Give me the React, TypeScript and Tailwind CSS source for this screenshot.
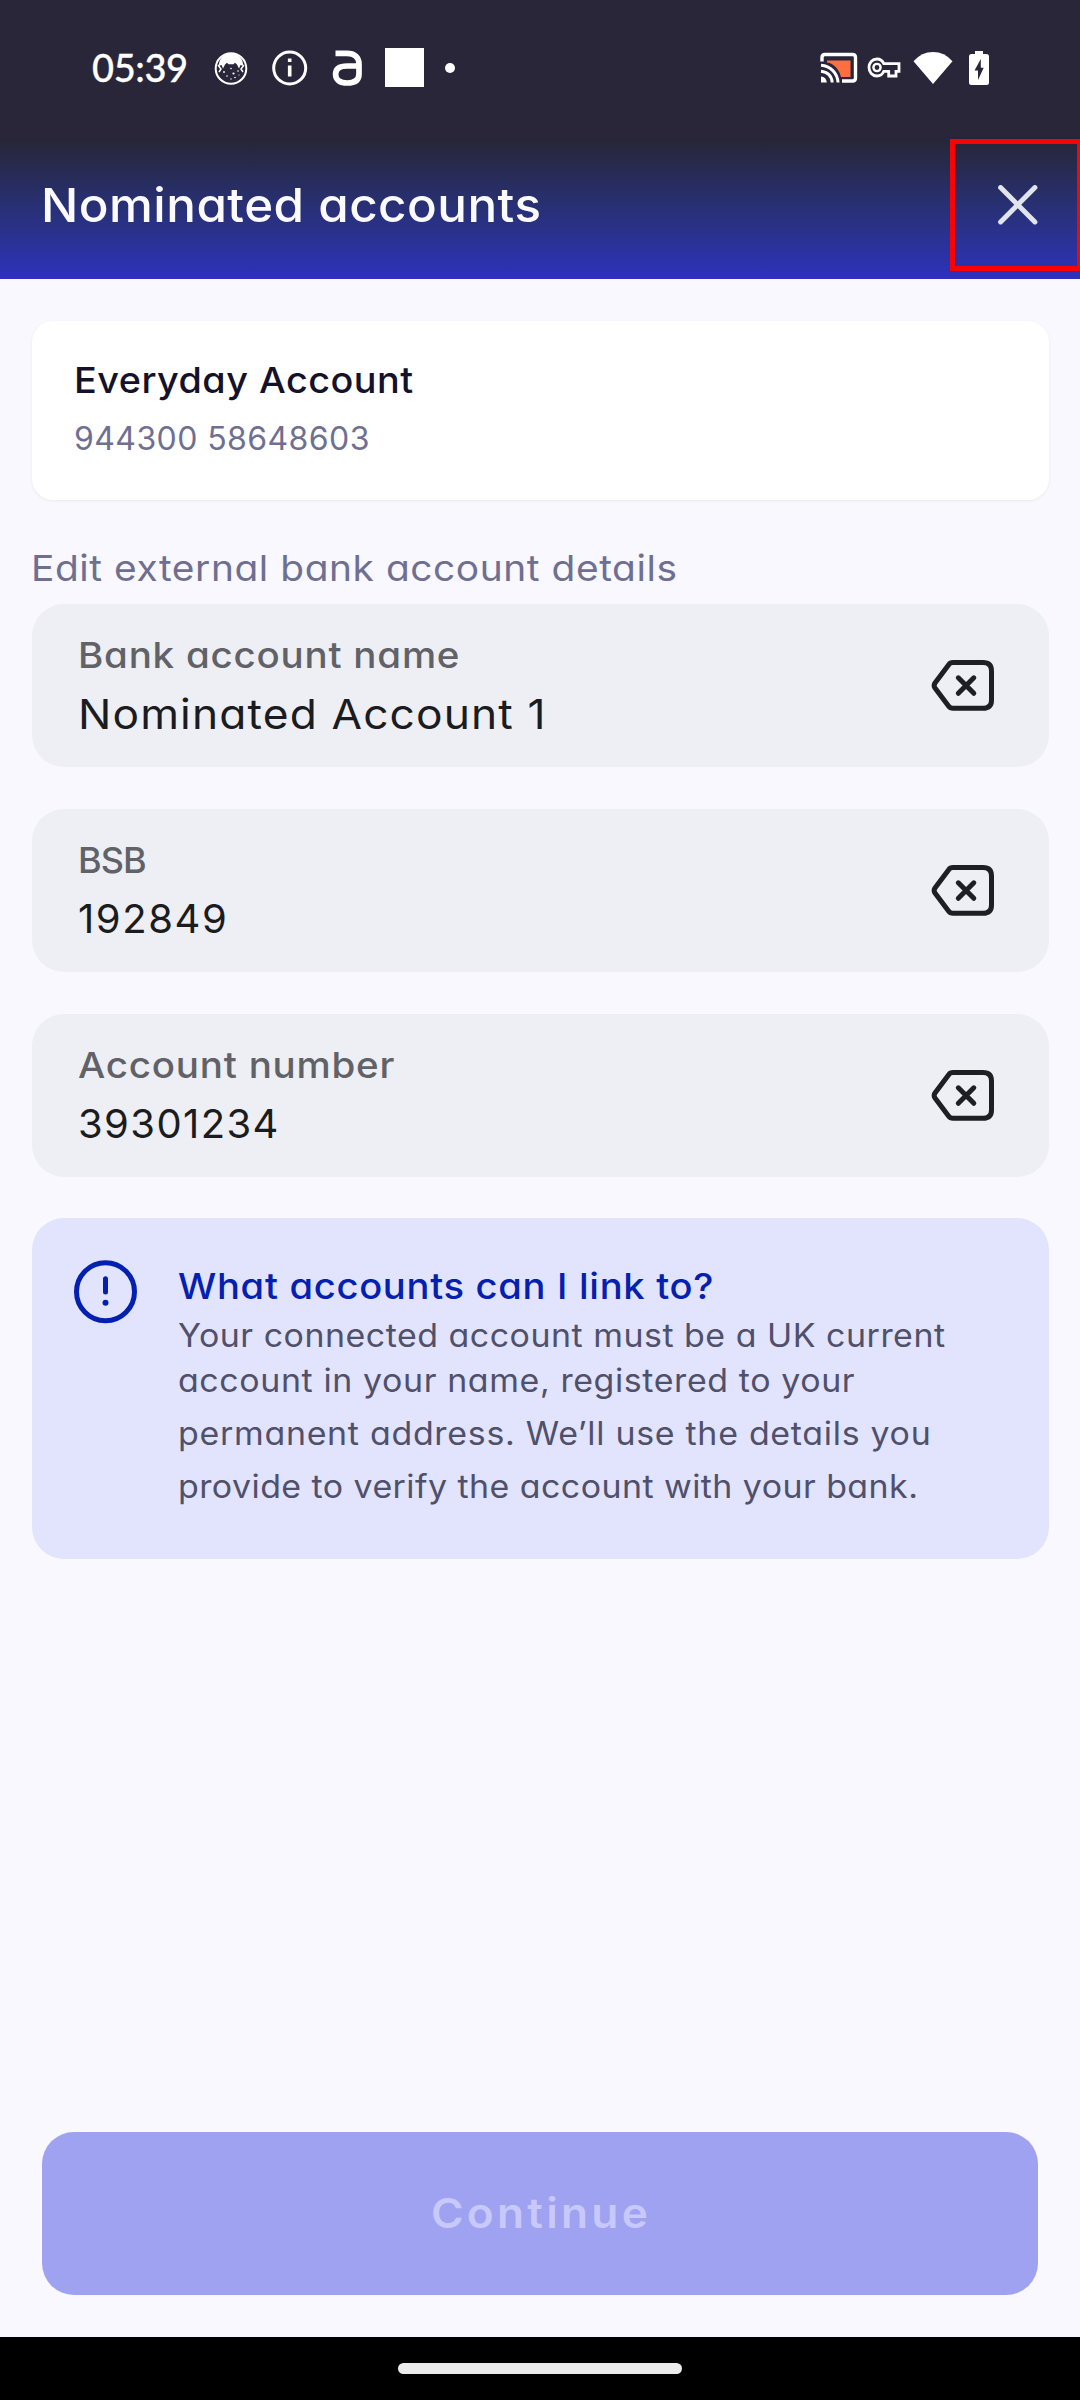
function StatusBar() {
  return (
    <div className="flex h-[137px] w-full items-start justify-between pt-[46px] pr-[91px] pl-[92px]">
      <div className="flex h-[43px] items-center">
        <span className="w-[96px] font-['Lato',sans-serif] text-[38px] leading-[43px] font-medium tracking-[-0.4px] text-white [-webkit-text-stroke:0.3px_white]">
          05:39
        </span>
        {/* masked face notification */}
        <svg className="ml-[25px] h-9 w-9" viewBox="0 0 36 36" fill="none">
          <circle cx="18" cy="18.500" r="15.300" stroke="#fff" strokeWidth="2" />
          <path
            d="M6.500 11.500C8.500 6 13 3.500 18 3.500S27.500 6 29.500 11.500L30.500 16L27.500 15L26 18.500L24 14.500L22 12.800L20.500 14.200H15.500L14 12.800L12 14.500L10 18.500L8.500 15L5.500 16Z"
            fill="#fff"
          />
          <path d="M5 15L8 19L6 22M31 15L28 19L30 22" stroke="#fff" strokeWidth="1.500" />
          <g fill="#fff">
            <circle cx="11" cy="22" r="0.9" />
            <circle cx="20.500" cy="23.500" r="1.100" />
            <circle cx="18" cy="18.500" r="0.8" />
            <circle cx="25" cy="21" r="0.8" />
            <circle cx="14" cy="26" r="0.8" />
            <circle cx="22" cy="27.500" r="0.8" />
            <circle cx="18" cy="29" r="0.7" />
            <circle cx="26" cy="25" r="0.6" />
          </g>
        </svg>
        {/* info notification */}
        <svg className="ml-[23px] h-9 w-9" viewBox="0 0 36 36" fill="none">
          <circle cx="17.700" cy="18" r="16" stroke="#fff" strokeWidth="3" />
          <path d="M15.900 8.500h3.600v3.600H15.900zM15.900 15.500h3.600v11H15.900z" fill="#fff" />
        </svg>
        {/* bank brand mark */}
        <svg className="ml-[23px] h-[38px] w-8" viewBox="0 0 32 38" fill="none">
          <path
            d="M4.500 4.300H16C23.500 4.300 28 8 28 15V25C28 31.300 23.500 34 16.300 34S4.600 31.300 4.600 25.300S9 17 16.300 17H28"
            stroke="#fff"
            strokeWidth="5.700"
          />
        </svg>
        <div className="ml-[22px] h-[39px] w-[39px] bg-white" />
        <div className="ml-[21px] h-[10px] w-[10px] rounded-full bg-white" />
      </div>

      <div className="flex h-[43px] items-center">
        {/* screen cast */}
        <svg className="h-8 w-[38px]" viewBox="0 0 38 32" fill="none">
          <path d="M2 9.500V5.500Q2 2.500 5 2.500H32.500Q35.500 2.500 35.500 5.500V26Q35.500 29 32.500 29H22" stroke="#fff" strokeWidth="3.400" />
          <path d="M7 8.500H30.500V25H21C19 17 14 11.500 7 10.500Z" fill="#ff6e40" />
          <path d="M1 13.300C10.500 14 17.500 21 18 30.500M1 19.200C7.500 19.800 11.700 24 12.200 30.500" stroke="#fff" strokeWidth="3" />
          <path d="M1 24.500C4.500 24.800 6.500 27 6.800 30.500H1Z" fill="#fff" />
        </svg>
        {/* vpn key */}
        <svg className="ml-[9px] h-6 w-[34px]" viewBox="0 0 34 24" fill="none">
          <path
            d="M16.800 7.700C15.500 4.700 13 3 10 3C5.200 3 2 6.900 2 11.500S5.200 20 10 20C13 20 15.500 18.300 16.800 15.300H21.700V20H29V15.300H32V7.700Z"
            stroke="#fff"
            strokeWidth="2.800"
          />
          <circle cx="10" cy="11.500" r="3.600" stroke="#fff" strokeWidth="2.400" />
          <path d="M22 11.500H29M25.500 11.500V16" stroke="#292639" strokeWidth="2" />
        </svg>
        {/* wifi */}
        <svg className="ml-3 h-[34px] w-10" viewBox="0 0 40 34">
          <path d="M0.500 10.300Q8.500 1 20 1T39.500 10.300L20 33Z" fill="#fff" />
        </svg>
        {/* charging battery */}
        <svg className="ml-4 h-[34px] w-5" viewBox="0 0 20 34">
          <path
            d="M6 0H14V3H17.500Q20 3 20 5.500V31.500Q20 34 17.500 34H2.500Q0 34 0 31.500V5.500Q0 3 2.500 3H6Z"
            fill="#fff"
          />
          <path d="M11.800 8L5.500 19.500H9V29L14.700 16.800H11.800Z" fill="#292639" />
        </svg>
      </div>
    </div>
  );
}

function TitleBar() {
  return (
    <div className="flex h-[142px] w-full items-start justify-between bg-linear-to-b from-[#272535] to-[#2d31bc] pl-[41px]">
      <h1 className="mt-9 origin-left scale-x-[1.05] text-[47px] leading-[64px] font-medium tracking-[0.44px] whitespace-nowrap text-[#fafaff]">
        Nominated accounts
      </h1>
      <button className="mt-[2px] flex h-[132px] w-[130px] items-center border-[5px] border-r-[3px] border-[#f80306] pl-[43px]">
        <svg className="h-10 w-10" viewBox="0 0 40 40" fill="none">
          <path d="M2.600 2.600L36.900 36.900M36.900 2.600L2.600 36.900" stroke="#e2e4ec" strokeWidth="5" strokeLinecap="round" />
        </svg>
      </button>
    </div>
  );
}

function ClearIcon() {
  return (
    <svg className="h-[52px] w-16" viewBox="0 0 64 52" fill="none" stroke="#1e1f22" strokeWidth="5" strokeLinecap="round" strokeLinejoin="round">
      <path d="M22 2.600H52Q60.500 2.600 60.500 11V40Q60.500 48.300 52 48.300H22Q19.200 48.300 17.500 46L4 28Q2.300 25.500 4 23L17.500 4.900Q19.200 2.600 22 2.600Z" />
      <path d="M27.300 17.800L42.800 33.300M42.800 17.800L27.300 33.300" />
    </svg>
  );
}

function Field({ label, labelClass, value, valueClass }: { label: string; labelClass: string; value: string; valueClass: string }) {
  return (
    <div className="flex h-[163px] items-start justify-between rounded-[32px] bg-[#eeeff5] pr-[54px] pl-[46px]">
      <div className="flex flex-col items-start whitespace-nowrap">
        <label className={`mt-[31px] origin-left text-[36px] leading-10 font-medium text-[#616267] ${labelClass}`}>{label}</label>
        <span className={`mt-[19px] origin-left leading-10 text-[#1b1c20] ${valueClass}`}>{value}</span>
      </div>
      <button className="mt-[56px]">
        <ClearIcon />
      </button>
    </div>
  );
}

function InfoCard() {
  return (
    <section className="mt-[41px] flex h-[341px] items-start gap-[40px] rounded-[32px] bg-[#e2e4fe] pl-[41px]">
      <svg className="mt-[41px] h-[65px] w-[65px]" viewBox="0 0 65 65" fill="none" stroke="#0420b0" strokeWidth="5" strokeLinecap="round">
        <circle cx="32.500" cy="32.800" r="29" />
        <path d="M32.500 19.700V33" />
        <circle cx="32.500" cy="43.800" r="3" fill="#0420b0" stroke="none" />
      </svg>
      <div className="flex origin-left scale-x-[1.06] flex-col pt-12 text-[32px] whitespace-nowrap text-[#50506b]">
        <h2 className="text-[36px] leading-10 font-medium tracking-[0.65px] text-[#0420b0]">What accounts can I link to?</h2>
        <p className="mt-[7px] leading-[46px] tracking-[0.48px]">Your connected account must be a UK current</p>
        <p className="-mt-px leading-[45px] tracking-[0.57px]">account in your name, registered to your</p>
        <p className="mt-1 leading-[53px] tracking-[0.67px]">permanent address. We’ll use the details you</p>
        <p className="leading-[53px] tracking-[0.42px]">provide to verify the account with your bank.</p>
      </div>
    </section>
  );
}

export default function App() {
  return (
    <div className="flex h-[2400px] w-[1080px] flex-col overflow-hidden bg-[#f8f8fe] font-['Inter',sans-serif] [font-feature-settings:'cv11']">
      <header className="bg-[#292639]">
        <StatusBar />
        <TitleBar />
      </header>

      <main className="flex flex-1 flex-col pr-[31px] pl-8">
        <section className="mt-[42px] flex h-[179px] flex-col items-start rounded-[21px] bg-white pl-[42px] whitespace-nowrap shadow-[0_1px_3px_rgba(40,40,90,0.07)]">
          <h2 className="mt-[35px] origin-left scale-x-[1.05] text-[36px] leading-[48px] font-medium tracking-[0.44px] text-[#14112b]">
            Everyday Account
          </h2>
          <p className="mt-[11px] text-[32px] leading-[48px] tracking-[0.41px] text-[#6f6f92]">944300 58648603</p>
        </section>

        <p className="mt-[44px] -ml-px origin-left scale-x-[1.08] self-start text-[36px] leading-[48px] tracking-[0.52px] whitespace-nowrap text-[#6f6f92]">
          Edit external bank account details
        </p>

        <div className="mt-[12px] flex flex-col gap-[42px]">
          <Field
            label="Bank account name"
            labelClass="scale-x-[1.07] tracking-[0.72px]"
            value="Nominated Account 1"
            valueClass="scale-x-[1.08] text-[41px] tracking-[1.05px]"
          />
          <Field label="BSB" labelClass="tracking-[-1px]" value="192849" valueClass="text-[40px] tracking-[1.6px]" />
          <Field label="Account number" labelClass="scale-x-[1.07] tracking-[0.72px]" value="39301234" valueClass="text-[40px] tracking-[1.4px]" />
        </div>

        <InfoCard />

        <button className="mt-auto mr-[11px] mb-[42px] ml-[10px] flex h-[163px] items-center justify-center rounded-[32px] bg-[#9fa1f1] text-[41px] font-semibold tracking-[3px] text-[#c7c8fb]">
          <span className="scale-x-[1.08] pl-[2px]">Continue</span>
        </button>
      </main>

      <footer className="flex h-[63px] items-start justify-center bg-black">
        <div className="mt-[26px] h-[11px] w-[284px] rounded-full bg-[#ebebeb]" />
      </footer>
    </div>
  );
}
